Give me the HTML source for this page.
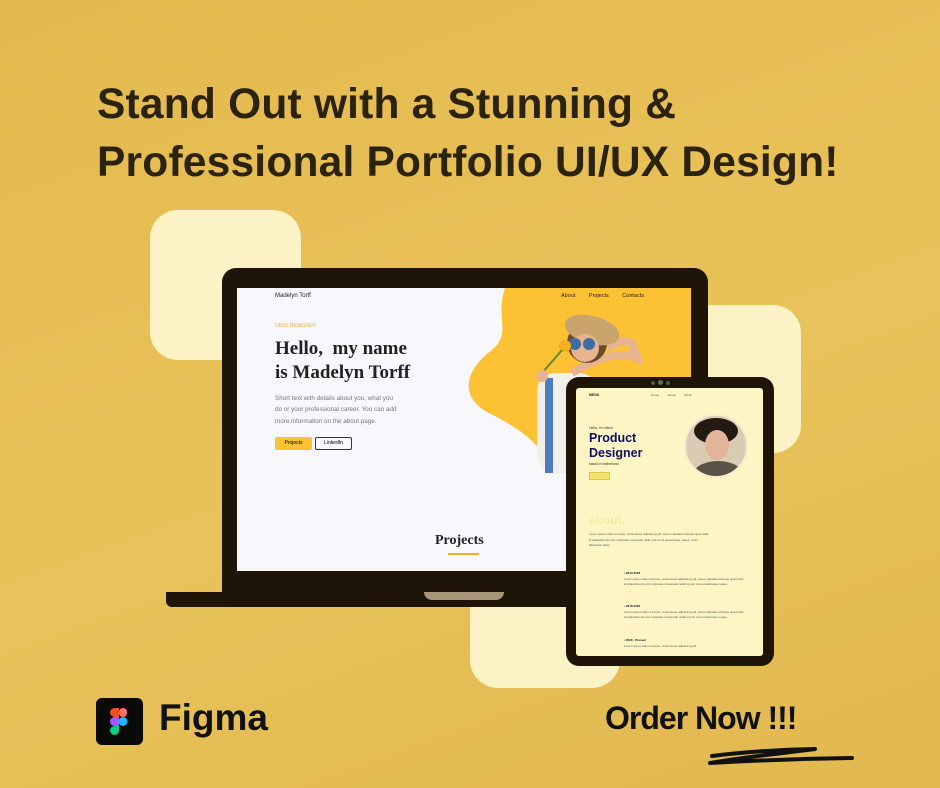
<!DOCTYPE html>
<html><head><meta charset="utf-8"><style>
*{margin:0;padding:0;box-sizing:border-box}
body{width:940px;height:788px;overflow:hidden;background:#E5BC52;font-family:"Liberation Sans",sans-serif;position:relative}
.a{position:absolute}
.h{left:97px;font-size:42.5px;font-weight:bold;color:#2b2210;letter-spacing:0.2px;white-space:nowrap}
.cr{background:#FBF3C6;border-radius:28px}
.t{font-size:3px;color:#555;line-height:5.5px}
</style></head><body>
<div class="a" style="left:0;top:0;width:940px;height:788px;background:linear-gradient(160deg,#E4BA4E 0%,#E8C25A 55%,#E2B850 100%)"></div>
<div class="a h" style="top:81px">Stand Out with a Stunning &amp;</div>
<div class="a h" style="top:139px">Professional Portfolio UI/UX Design!</div>

<div class="a cr" style="left:150px;top:210px;width:151px;height:150px"></div>
<div class="a cr" style="left:680px;top:305px;width:121px;height:148px"></div>
<div class="a cr" style="left:470px;top:540px;width:150px;height:148px"></div>

<!-- laptop -->
<div class="a" style="left:222px;top:268px;width:486px;height:324px;background:#1e1408;border-radius:14px 14px 0 0"></div>
<div class="a" style="left:166px;top:592px;width:605px;height:15px;background:#1e1408;border-radius:0 0 6px 6px"></div>
<div class="a" style="left:424px;top:592px;width:80px;height:8px;background:#a89478;border-radius:0 0 8px 8px"></div>
<div class="a" style="left:237px;top:288px;width:454px;height:283px;background:#f8f8fc;overflow:hidden">
 <svg class="a" style="left:0;top:0" width="454" height="283"><path d="M268 0 C258 30,275 45,255 62 C228 82,222 108,250 124 C275 137,300 150,310 175 L454 175 L454 0 Z" fill="#FDC234"/>
 <rect x="300" y="85" width="60" height="100" rx="18" fill="#f1efe9"/><rect x="308" y="90" width="8" height="95" fill="#4d7bbf"/>
 <path d="M335 85 Q375 60 400 70 L395 55 Q385 50 370 60" stroke="#e8b48f" stroke-width="8" fill="none"/>
 <circle cx="350" cy="55" r="20" fill="#6b4a2b"/><ellipse cx="355" cy="42" rx="28" ry="14" fill="#c9a46b" transform="rotate(15 355 42)"/><circle cx="348" cy="60" r="14" fill="#e8b48f"/>
 <circle cx="338" cy="56" r="6" fill="#3a6ea0"/><circle cx="352" cy="56" r="6" fill="#3a6ea0"/>
 <circle cx="328" cy="58" r="6" fill="#f3b01f"/><path d="M325 62 L305 85" stroke="#5a8a3a" stroke-width="2"/>
 <circle cx="305" cy="88" r="6" fill="#e8b48f"/></svg>
 <div class="a" style="left:38px;top:5px;font-size:6px;color:#222">Madelyn Torff</div>
 <div class="a" style="left:324px;top:5px;font-size:5.5px;color:#222;word-spacing:12px">About Projects Contacts</div>
 <div class="a" style="left:38px;top:35px;font-size:5px;color:#f3b01f">UI/UX DESIGNER</div>
 <div class="a" style="left:38px;top:49px;font-family:'Liberation Serif',serif;font-weight:bold;font-size:19px;line-height:24px;color:#222">Hello,&nbsp; my name<br>is Madelyn Torff</div>
 <div class="a" style="left:38px;top:105px;font-size:6.3px;line-height:11.3px;color:#777">Short text with details about you, what you<br>do or your professional career. You can add<br>more information on the about page.</div>
 <div class="a" style="left:38px;top:149px;width:37px;height:13px;background:#FDC234;border-radius:2px;font-size:5px;text-align:center;line-height:13px">Projects</div>
 <div class="a" style="left:78px;top:149px;width:37px;height:13px;border:1px solid #333;border-radius:2px;font-size:5px;text-align:center;line-height:11px">LinkedIn</div>
 <div class="a" style="left:198px;top:245px;font-family:'Liberation Serif',serif;font-weight:bold;font-size:14px;color:#222">Projects</div>
 <div class="a" style="left:211px;top:265px;width:31px;height:1.5px;background:#f3b01f"></div>
</div>

<!-- tablet -->
<div class="a" style="left:566px;top:377px;width:208px;height:289px;background:#1e1408;border-radius:13px"></div>
<div class="a" style="left:576px;top:388px;width:187px;height:268px;background:#FDF5C4;border-radius:3px;overflow:hidden">
 <div class="a" style="left:13px;top:5px;font-size:3.5px;font-weight:bold;color:#222">MENU</div>
 <div class="a" style="left:75px;top:5px;font-size:3px;color:#555;word-spacing:8px">Home About Work</div>
 <div class="a" style="left:13px;top:38px;font-size:3.5px;color:#333">Hello, I'm Mitch</div>
 <div class="a" style="left:13px;top:43px;font-size:12.5px;line-height:15px;font-weight:bold;color:#0e1060">Product<br>Designer</div>
 <div class="a" style="left:13px;top:74px;font-size:3.3px;color:#333">based in Netherland.</div>
 <div class="a" style="left:13px;top:84px;width:21px;height:8px;background:#f2e36a;border:1px solid #d8c94a"></div>
 <div class="a" style="left:108px;top:26px;width:64px;height:64px;border-radius:50%;background:#d9cbb4;border:2px solid #f5ecd0;overflow:hidden">
  <div class="a" style="left:8px;top:2px;width:44px;height:26px;border-radius:50%;background:#231a14"></div>
  <div class="a" style="left:19px;top:14px;width:24px;height:30px;border-radius:50%;background:#e2b59b"></div>
  <div class="a" style="left:8px;top:45px;width:48px;height:25px;border-radius:50%;background:#5a5245"></div>
 </div>
 <div class="a" style="left:13px;top:125px;font-size:12px;font-weight:bold;color:#f7eb9c">about.</div>
 <div class="a t" style="left:13px;top:144px;width:120px">Lorem ipsum dolor sit amet, consectetur adipiscing elit. Amet vulputate tristique quam felis id phasellus dui orci vulputate consequat nulla proin id et scelerisque neque, proin bibendum dolor.</div>
 <div class="a t" style="left:48px;top:183px;width:120px"><b style="color:#111">• 2014-2018</b><br>Lorem ipsum dolor sit amet, consectetur adipiscing elit. Amet vulputate tristique quam felis id phasellus dui orci vulputate consequat nullam proin id et scelerisque neque.</div>
 <div class="a t" style="left:48px;top:216px;width:120px"><b style="color:#111">• 2018-2020</b><br>Lorem ipsum dolor sit amet, consectetur adipiscing elit. Amet vulputate tristique quam felis id phasellus dui orci vulputate consequat nullam proin id et scelerisque neque.</div>
 <div class="a t" style="left:48px;top:250px;width:120px"><b style="color:#111">• 2020 - Present</b><br>Lorem ipsum dolor sit amet, consectetur adipiscing elit.</div>
</div>
<div class="a" style="left:651px;top:381px;width:4px;height:4px;border-radius:50%;background:#555"></div>
<div class="a" style="left:658px;top:380px;width:5px;height:5px;border-radius:50%;background:#666"></div>
<div class="a" style="left:666px;top:381px;width:4px;height:4px;border-radius:50%;background:#555"></div>

<!-- figma -->
<div class="a" style="left:96px;top:698px;width:47px;height:47px;background:#0a0a0a;border-radius:6px"></div>
<svg class="a" style="left:110px;top:708px" width="18" height="27"><rect x="0" y="0" width="9" height="9" rx="4.5" fill="#F24E1E"/><rect x="4" y="0" width="5" height="9" fill="#F24E1E"/><rect x="9" y="0" width="8" height="9" rx="4" fill="#FF7262"/><rect x="0" y="9" width="9" height="9" rx="4.5" fill="#A259FF"/><rect x="4" y="9" width="5" height="9" fill="#A259FF"/><circle cx="13" cy="13.5" r="4.5" fill="#1ABCFE"/><path d="M4.5 18 H9 V22.5 A4.5 4.5 0 1 1 4.5 18Z" fill="#0ACF83"/></svg>
<div class="a" style="left:159px;top:697px;font-size:37px;font-weight:bold;color:#111">Figma</div>
<div class="a" style="left:605px;top:700px;font-size:32px;font-weight:bold;color:#111;letter-spacing:-1px;white-space:nowrap">Order Now !!!</div>
<svg class="a" style="left:700px;top:742px" width="160" height="30"><path d="M12 14 Q60 8 115 7 L75 12 Q40 16 10 21 Q80 17 152 16" stroke="#111" stroke-width="4" fill="none" stroke-linecap="round" stroke-linejoin="round"/></svg>
</body></html>
